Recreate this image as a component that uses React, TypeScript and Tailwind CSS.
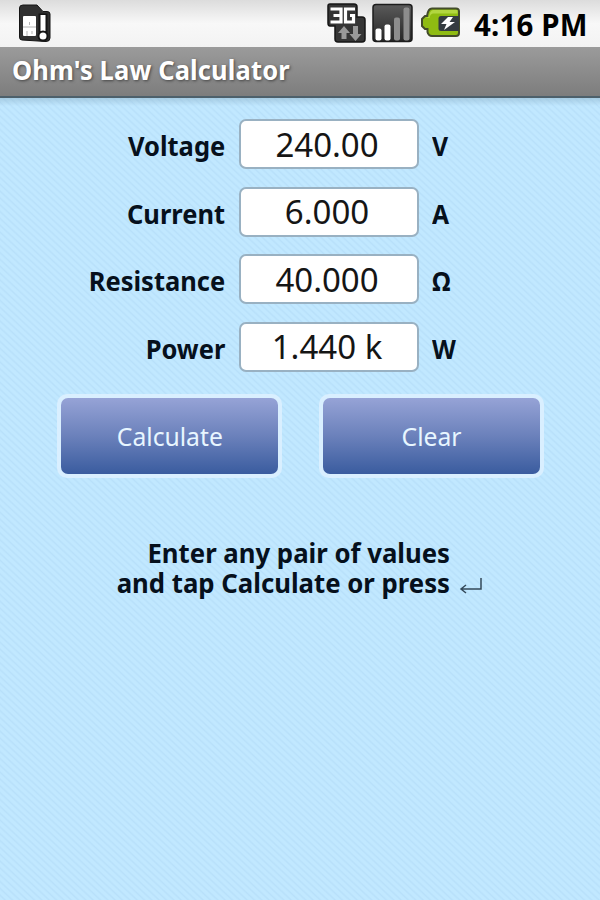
interface Field {
  label: string;
  value: string;
  unit: string;
}

const fields: Field[] = [
  { label: "Voltage", value: "240.00", unit: "V" },
  { label: "Current", value: "6.000", unit: "A" },
  { label: "Resistance", value: "40.000", unit: "Ω" },
  { label: "Power", value: "1.440 k", unit: "W" },
];

function SimIcon() {
  return (
    <svg width="34" height="40" viewBox="0 0 34 40">
      <path d="M1.5 5 Q1.500 2 5 2 H19 L25 8.500 H29 Q32 8.500 32 11 V35 Q32 38.500 28 38.500 L4 37 Q1.500 37 1.500 34 Z" fill="#303030" stroke="#151515" strokeWidth="1" />
      <rect x="5" y="13" width="13" height="20" rx="1" fill="#fff" />
      <path d="M5 24 h13 M11.500 19 v3 M9 28 v5 M14 28 v3" stroke="#b5b5b5" strokeWidth="1" fill="none" />
      <path d="M20.500 10.500 h9 v19 h-9 z" fill="#151515" />
      <path d="M22.500 12 h5 v16 h-5 z" fill="#fff" />
      <circle cx="25" cy="33" r="5.500" fill="#151515" />
      <circle cx="25" cy="33" r="3.500" fill="#fff" />
    </svg>
  );
}

function NetworkIcon() {
  return (
    <svg width="42" height="42" viewBox="0 0 42 42">
      <path d="M3 2 H27 Q30 2 30 5 V15 H35 Q38 15 38 18 V37 Q38 40 35 40 H11 Q8 40 8 37 V24 H3 Q1 24 1 21 V4 Q1 2 3 2 Z" fill="#353535" stroke="#161616" strokeWidth="1.500" />
      <path d="M3.500 7 H14 V20 H3.500 M6.500 13.500 H14" fill="none" stroke="#fff" strokeWidth="3.200" />
      <path d="M28 7 H18.500 V20 H26.500 V13.500 H23" fill="none" stroke="#fff" strokeWidth="3.200" />
      <path d="M17 24 L23 31 H19.500 V37 H14.500 V31 H11 Z" fill="#999" />
      <path d="M26 24 H31 V32 H34.500 L28.500 39 L22.500 32 H26 Z" fill="#999" />
    </svg>
  );
}

function SignalIcon() {
  return (
    <svg width="42" height="42" viewBox="0 0 42 42">
      <defs>
        <linearGradient id="signal" x2="0" y2="1">
          <stop stopColor="#5a5a5a" />
          <stop offset="1" stopColor="#252525" />
        </linearGradient>
      </defs>
      <rect x="1" y="2.500" width="39" height="37" rx="3" fill="url(#signal)" stroke="#1c1c1c" strokeWidth="1.500" />
      <rect x="3.500" y="26.500" width="6" height="12" rx="2" fill="#fff" />
      <rect x="12.500" y="22.500" width="6" height="16" rx="2" fill="#fff" />
      <rect x="22" y="15.500" width="6" height="23" rx="2" fill="#8d8d8d" />
      <rect x="31.500" y="5.500" width="6" height="33" rx="2" fill="#8d8d8d" />
    </svg>
  );
}

function BatteryIcon() {
  return (
    <svg width="40" height="34" viewBox="0 0 40 34">
      <path d="M11 1.500 H35 Q38 1.500 38 4.500 V26 Q38 29 35 29 H11 Q7.500 29 6.500 25 V22 H4 L1 19 V12 L4 9 H6 Q7 1.500 11 1.500 Z" fill="#8fbc12" stroke="#434c2b" strokeWidth="2" />
      <path d="M12 3 H36.500 V6.500 H12 Q9 7 8.500 11 H4.500 Q6 10 8 10 Q8.500 4 12 3 Z" fill="#b2d640" />
      <path d="M20 9 H38 V24 H20 Q17.500 24 17.500 21.500 V11.500 Q17.500 9 20 9 Z" fill="#343b40" />
      <path d="M27 10 L20 17 H25.500 L23 23 L34 15 H28.500 L32 10 Z" fill="#fff" />
    </svg>
  );
}

function ActionButton({ text }: { text: string }) {
  return (
    <button className="h-[84px] w-[225px] rounded-[10px] bg-[#d9efff] p-1">
      <span className="flex h-full items-center justify-center rounded-[7px] bg-linear-to-b from-[#96a3d6] via-[#6b81bb] to-[#3a5c9f] pt-[2px] text-[26px] text-[#e8f6ff]">
        <span className="scale-x-[0.95]">{text}</span>
      </span>
    </button>
  );
}

export default function App() {
  return (
    <div className="flex h-[900px] w-[600px] flex-col overflow-hidden bg-[#bfe6ff] font-['Noto_Sans','Open_Sans',sans-serif] text-[#06101c]">
      <header className="flex h-[47px] shrink-0 items-start bg-linear-to-b from-[#dcdcdc] via-[#f8f8f8] to-[#f3f3f3]">
        <div className="mt-[3px] ml-[18px]">
          <SimIcon />
        </div>
        <div className="mt-[2px] ml-auto">
          <NetworkIcon />
        </div>
        <div className="mt-[2px] ml-[3px]">
          <SignalIcon />
        </div>
        <div className="mt-[7px] ml-[7px]">
          <BatteryIcon />
        </div>
        <div className="mt-[2px] mr-[11px] ml-[13px] w-[115px] text-[30px] leading-[46px] font-bold whitespace-nowrap text-black">
          <span className="inline-block origin-left scale-x-[0.98] tracking-[0.2px]">4:16 PM</span>
        </div>
      </header>
      <div className="h-[51px] shrink-0 border-b-2 border-[#4d606b] bg-linear-to-b from-[#9b9b9b] to-[#7d7d7d] pl-3 text-[26px] leading-[46px] font-bold whitespace-nowrap text-white [text-shadow:1px_1px_3px_#444]">
        <span className="inline-block origin-left scale-x-[0.98] tracking-[0.15px]">Ohm's Law Calculator</span>
      </div>
      <main className="flex flex-1 flex-col bg-[linear-gradient(to_bottom,#8fb4cb88,transparent_8px),repeating-linear-gradient(43deg,#c1e8ff_0px,#c1e8ff_2px,#b8e0fa_3.5px,#c1e8ff_5px)] pt-[21px]">
        <div className="flex flex-col gap-[17.5px]">
          {fields.map((field) => (
            <div key={field.label} className="flex h-[50px] items-center">
              <div className="w-[225px] pt-[5px] text-right text-[26px] font-bold">
                <span className="inline-block origin-right scale-x-[0.98]">{field.label}</span>
              </div>
              <div className="ml-[14px] flex h-[50px] w-[180px] items-center justify-center rounded-[7px] border-2 border-[#99b1c2] bg-white pr-1 text-[33px] leading-none whitespace-pre text-[#151515]">
                {field.value}
              </div>
              <div className="ml-[13px] pt-[5px] text-[26px] font-bold">
                <span className="inline-block origin-left scale-x-[0.95]">{field.unit}</span>
              </div>
            </div>
          ))}
        </div>
        <div className="mt-[22px] ml-[57px] flex gap-[37px]">
          <ActionButton text="Calculate" />
          <ActionButton text="Clear" />
        </div>
        <div className="mt-[60px] flex items-end">
          <div className="w-[450px] text-right text-[26px] leading-[30px] font-bold whitespace-nowrap">
            <p className="origin-right scale-x-[0.99]">Enter any pair of values</p>
            <p className="origin-right scale-x-[0.99]">and tap Calculate or press</p>
          </div>
          <svg width="24" height="20" viewBox="0 0 24 20" className="ml-[9px]" fill="none" stroke="#34495a" strokeWidth="1.500">
            <path d="M22 0 V11 H2 M7 7 L2 11 L7 15" />
          </svg>
        </div>
      </main>
    </div>
  );
}
